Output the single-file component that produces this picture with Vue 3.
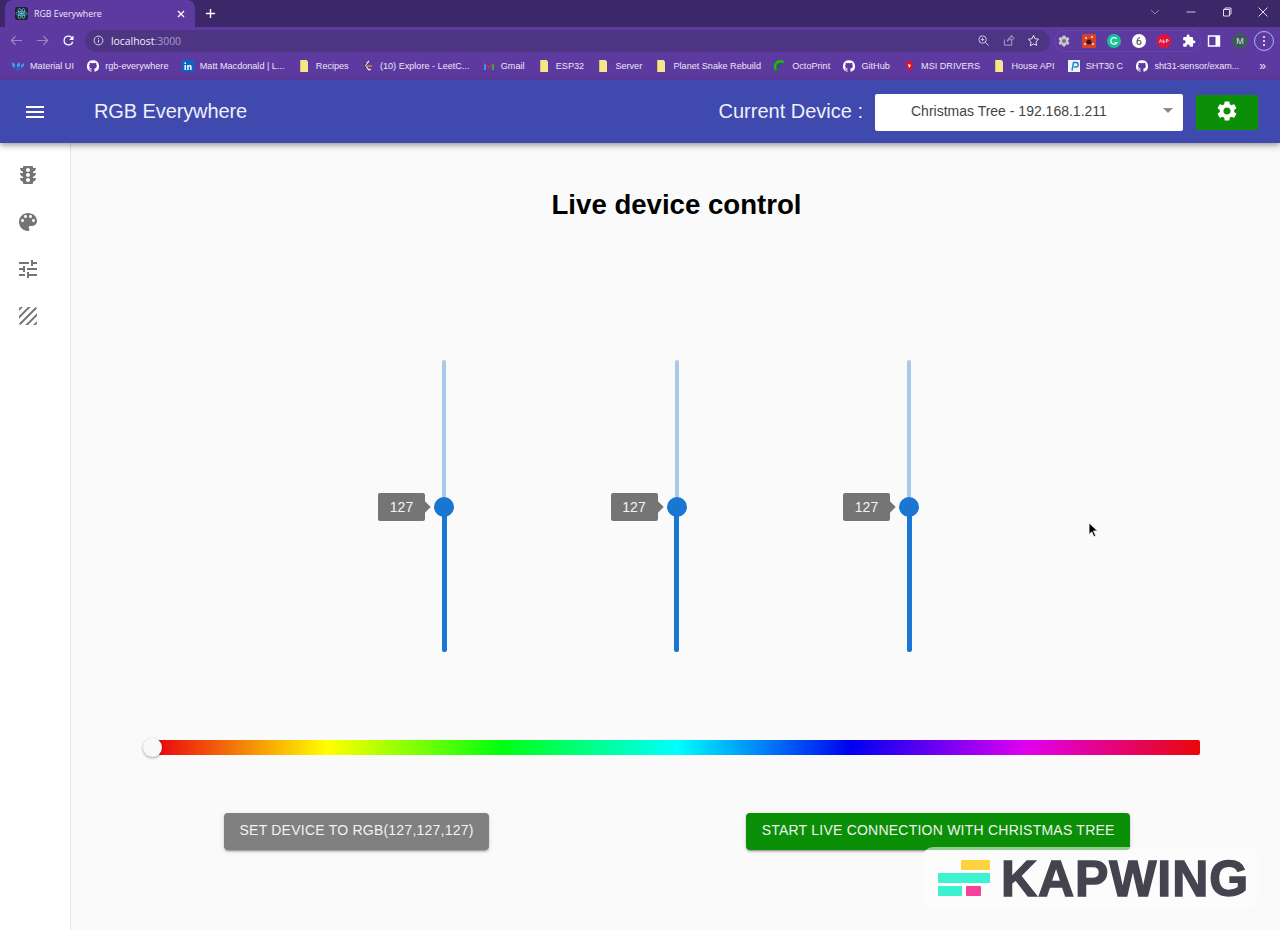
<script setup>
const bookmarks = [
  { icon: 'mui', label: 'Material UI' },
  { icon: 'gh', label: 'rgb-everywhere' },
  { icon: 'in', label: 'Matt Macdonald | L...' },
  { icon: 'note', label: 'Recipes' },
  { icon: 'leet', label: '(10) Explore - LeetC...' },
  { icon: 'gmail', label: 'Gmail' },
  { icon: 'note', label: 'ESP32' },
  { icon: 'note', label: 'Server' },
  { icon: 'note', label: 'Planet Snake Rebuild' },
  { icon: 'octo', label: 'OctoPrint' },
  { icon: 'gh', label: 'GitHub' },
  { icon: 'msi', label: 'MSI DRIVERS' },
  { icon: 'note', label: 'House API' },
  { icon: 'p', label: 'SHT30 C' },
  { icon: 'gh', label: 'sht31-sensor/exam...' }
]

const github = 'M12 .3a12 12 0 0 0-3.8 23.4c.6.1.8-.3.8-.6v-2c-3.3.7-4-1.6-4-1.6-.6-1.4-1.4-1.8-1.4-1.8-1-.7.1-.7.1-.7 1.2 0 1.9 1.2 1.9 1.2 1 1.8 2.8 1.3 3.5 1 0-.8.4-1.3.7-1.6-2.7-.3-5.5-1.3-5.5-6 0-1.2.5-2.3 1.3-3.1-.2-.4-.6-1.6 0-3.2 0 0 1-.3 3.4 1.2a11.5 11.5 0 0 1 6 0c2.3-1.5 3.3-1.2 3.3-1.2.6 1.6.2 2.8 0 3.2.9.8 1.3 1.9 1.3 3.2 0 4.6-2.8 5.6-5.5 5.9.5.4.9 1 .9 2.2v3.3c0 .3.1.7.8.6A12 12 0 0 0 12 .3'

const navIcons = [
  'M20 10h-3V8.86c1.72-.45 3-2 3-3.86h-3V4c0-.55-.45-1-1-1H8c-.55 0-1 .45-1 1v1H4c0 1.86 1.28 3.41 3 3.86V10H4c0 1.86 1.28 3.41 3 3.86V15H4c0 1.86 1.28 3.41 3 3.86V20c0 .55.45 1 1 1h8c.55 0 1-.45 1-1v-1.14c1.72-.45 3-2 3-3.86h-3v-1.14c1.72-.45 3-2 3-3.86zm-8 9c-1.11 0-2-.9-2-2s.89-2 2-2c1.1 0 2 .9 2 2s-.89 2-2 2zm0-5c-1.11 0-2-.9-2-2s.89-2 2-2c1.1 0 2 .9 2 2s-.89 2-2 2zm0-5c-1.11 0-2-.9-2-2 0-1.11.89-2 2-2 1.1 0 2 .89 2 2 0 1.1-.89 2-2 2z',
  'M12 3c-4.97 0-9 4.03-9 9s4.03 9 9 9c.83 0 1.5-.67 1.5-1.5 0-.39-.15-.74-.39-1.01-.23-.26-.38-.61-.38-.99 0-.83.67-1.5 1.5-1.5H16c2.76 0 5-2.24 5-5 0-4.42-4.03-8-9-8zm-5.5 9c-.83 0-1.5-.67-1.5-1.5S5.67 9 6.5 9 8 9.67 8 10.5 7.33 12 6.5 12zm3-4C8.67 8 8 7.33 8 6.5S8.67 5 9.5 5s1.5.67 1.5 1.5S10.33 8 9.5 8zm5 0c-.83 0-1.5-.67-1.5-1.5S13.67 5 14.5 5s1.5.67 1.5 1.5S15.33 8 14.5 8zm3 4c-.83 0-1.5-.67-1.5-1.5S16.67 9 17.5 9s1.5.67 1.5 1.5-.67 1.5-1.5 1.5z',
  'M3 17v2h6v-2H3zM3 5v2h10V5H3zm10 16v-2h8v-2h-8v-2h-2v6h2zM7 9v2H3v2h4v2h2V9H7zm14 4v-2H11v2h10zm-6-4h2V7h4V5h-4V3h-2v6z',
  'M19.51 3.08L3.08 19.51c.09.34.27.65.51.9.25.24.56.42.9.51L20.93 4.49c-.19-.69-.73-1.23-1.42-1.41zM11.88 3L3 11.88v2.83L14.71 3h-2.83zM5 3c-1.1 0-2 .9-2 2v2l4-4H5zm14 18c.55 0 1.05-.22 1.41-.59.37-.36.59-.86.59-1.41v-2l-4 4h2zm-9.71 0h2.83L21 12.12V9.29L9.29 21z'
]

const channels = [127, 127, 127]
</script>

<template>
  <div class="app">
    <!-- browser window -->
    <div class="tabStrip">
      <div class="tab">
        <svg class="tabIcon" viewBox="0 0 12 12">
          <rect width="12" height="12" rx="2" fill="#20232a" />
          <circle cx="6" cy="6" r="1.2" fill="#61dafb" />
          <g fill="none" stroke="#61dafb" stroke-width=".6">
            <ellipse cx="6" cy="6" rx="5" ry="2" />
            <ellipse cx="6" cy="6" rx="5" ry="2" transform="rotate(60 6 6)" />
            <ellipse cx="6" cy="6" rx="5" ry="2" transform="rotate(120 6 6)" />
          </g>
        </svg>
        <span class="tabTitle">RGB Everywhere</span>
        <svg class="tabClose" viewBox="0 0 10 10"><path d="M2 2l6 6M8 2l-6 6" stroke="#fff" stroke-width="1.3" /></svg>
      </div>
      <svg class="newTab" viewBox="0 0 12 12"><path d="M6 1v10M1 6h10" stroke="#fff" stroke-width="1.5" /></svg>
      <div class="windowControls">
        <svg viewBox="0 0 12 12"><path d="M2 4l4 4 4-4" fill="none" stroke="#8f84b0" /></svg>
        <svg viewBox="0 0 12 12"><path d="M1.5 6h9" stroke="#cfc8e0" /></svg>
        <svg viewBox="0 0 12 12"><path d="M2.5 3.5h6v6.500h-6zM4 3.500V2h6v6H8.500" fill="none" stroke="#e3deee" /></svg>
        <svg viewBox="0 0 12 12"><path d="M1.500 1.500l9 9M10.500 1.500l-9 9" stroke="#e3deee" /></svg>
      </div>
    </div>

    <div class="toolbar">
      <div class="navButtons">
        <svg viewBox="0 0 16 16"><path d="M14 8H3M7 3.500L2.500 8 7 12.500" fill="none" stroke="#9a86c4" stroke-width="1.300" /></svg>
        <svg viewBox="0 0 16 16"><path d="M2 8h11M9 3.500L13.500 8 9 12.500" fill="none" stroke="#9a86c4" stroke-width="1.300" /></svg>
        <svg viewBox="0 0 24 24"><path fill="#fff" d="M17.650 6.350A7.960 7.960 0 0 0 12 4a8 8 0 1 0 7.730 10h-2.080A6 6 0 1 1 12 6c1.660 0 3.140.69 4.220 1.780L13 11h7V4l-2.350 2.350z" /></svg>
      </div>
      <div class="urlBar">
        <svg class="infoIcon" viewBox="0 0 12 12">
          <circle cx="6" cy="6" r="4.800" fill="none" stroke="#e6dff3" />
          <path d="M6 5.300v3.200M6 3.400v1" stroke="#e6dff3" />
        </svg>
        <span class="urlHost">localhost</span><span class="urlPort">:3000</span>
        <div class="urlActions">
          <svg viewBox="0 0 14 14"><circle cx="6" cy="6" r="4" fill="none" stroke="#d8cfe8" /><path d="M9 9l3.500 3.500M4.200 6h3.600M6 4.200v3.600" stroke="#d8cfe8" /></svg>
          <svg viewBox="0 0 14 14"><path d="M2.500 6v6h8V8M6 8c0-3 2-4.500 4-4.500V1.500L13 4.500 10 7.500v-2C8 5.500 6.500 6 6 8z" fill="none" stroke="#b9a9d6" /></svg>
          <svg viewBox="0 0 14 14"><path d="M7 1.500l1.700 3.600 3.800.5-2.800 2.700.7 3.900L7 10.800l-3.400 1.900.7-3.900L1.500 5.600l3.800-.5z" fill="none" stroke="#f0ebf8" /></svg>
        </div>
      </div>
      <div class="extensions">
        <div class="extGroup">
          <svg viewBox="0 0 24 24"><path fill="#c9c6ce" d="M19.140 12.940c.04-.3.06-.61.06-.94 0-.32-.02-.64-.07-.94l2.030-1.580c.18-.14.23-.41.12-.61l-1.920-3.320c-.12-.22-.37-.29-.59-.22l-2.390.96c-.5-.38-1.030-.7-1.620-.94l-.36-2.540c-.04-.24-.24-.41-.48-.41h-3.840c-.24 0-.43.17-.47.41l-.36 2.540c-.59.24-1.130.57-1.620.94l-2.390-.96c-.22-.08-.47 0-.59.22L2.740 8.870c-.12.21-.08.47.12.61l2.030 1.580c-.05.3-.09.63-.09.94s.02.64.07.94l-2.030 1.580c-.18.14-.23.41-.12.61l1.920 3.320c.12.22.37.29.59.22l2.390-.96c.5.38 1.030.7 1.620.94l.36 2.540c.05.24.24.41.48.41h3.840c.24 0 .44-.17.47-.41l.36-2.540c.59-.24 1.130-.56 1.620-.94l2.390.96c.22.08.47 0 .59-.22l1.920-3.320c.12-.22.07-.47-.12-.61l-2.010-1.580z" /><circle cx="12" cy="12" r="3.500" fill="#77707f" /></svg>
          <svg viewBox="0 0 14 14"><rect width="14" height="14" rx="1" fill="#d7402a" /><path d="M3 3h2v2H3zM9 2h2v2H9zM2 9h2v2H2zM10 9h2v2h-2z" fill="#f2c1a0" /><circle cx="7" cy="8" r="2.500" fill="#2a1a20" /></svg>
          <svg viewBox="0 0 14 14"><circle cx="7" cy="7" r="7" fill="#15c39a" /><path d="M9.800 5A3.300 3.300 0 1 0 10 8.500H7.500" fill="none" stroke="#fff" stroke-width="1.200" /></svg>
          <svg viewBox="0 0 14 14"><circle cx="7" cy="7" r="7" fill="#fff" /><path d="M8 3.500C6 4 5 6 5 8c0 1.500.8 2.500 2 2.500S9 9.500 9 8.300 8 6.500 7 6.500 5.500 7 5 8" fill="none" stroke="#555" stroke-width="1.100" /></svg>
          <svg viewBox="0 0 14 14"><path d="M4 0h6l4 4v6l-4 4H4l-4-4V4z" fill="#d8163f" /><path d="M2.500 8.500l1-3 1 3M6 5.500v3h1.200a.8.8 0 0 0 0-1.500H6M9.500 8.500v-3h1a.8.8 0 0 1 0 1.600h-1" fill="none" stroke="#fff" stroke-width=".7" /></svg>
          <svg viewBox="0 0 24 24"><path fill="#fff" d="M20.500 11H19V7c0-1.100-.9-2-2-2h-4V3.500a2.500 2.500 0 0 0-5 0V5H4c-1.100 0-1.990.9-1.990 2v3.800H3.500c1.490 0 2.700 1.210 2.700 2.700s-1.210 2.700-2.700 2.700H2V20c0 1.100.9 2 2 2h3.800v-1.500c0-1.490 1.210-2.700 2.700-2.700 1.490 0 2.700 1.210 2.700 2.700V22H17c1.100 0 2-.9 2-2v-4h1.500a2.500 2.500 0 0 0 0-5z" /></svg>
        </div>
        <svg viewBox="0 0 14 14"><path d="M1.500 2h11v10h-11z" fill="none" stroke="#fff" stroke-width="1.400" /><path d="M8.500 2h4v10h-4z" fill="#fff" /></svg>
        <span class="avatar">M</span>
        <span class="menuRing"><i></i><i></i><i></i></span>
      </div>
    </div>

    <div class="bookmarks">
      <div v-for="(b, i) in bookmarks" :key="i" class="bookmark">
        <svg v-if="b.icon === 'gh'" class="bmIcon" viewBox="0 0 24 24"><path :d="github" fill="#fff" /></svg>
        <svg v-else-if="b.icon === 'note'" class="bmIcon" viewBox="0 0 12 12"><path d="M2 0h6.500L10 1.500V12H2z" fill="#f6e58d" /><path d="M2 0h1v12H2z" fill="#d9c55c" /></svg>
        <svg v-else-if="b.icon === 'mui'" class="bmIcon" viewBox="0 0 12 12"><path d="M0 2l3 2v4L0 6zM8 2L5 4v4l3-2zM9 8l3-2V3L9 5z" fill="#3d9be9" /><path d="M4 9l2 2 3-2-2-1z" fill="#1b6fc2" /></svg>
        <svg v-else-if="b.icon === 'in'" class="bmIcon" viewBox="0 0 12 12"><rect width="12" height="12" rx="1" fill="#0a66c2" /><path d="M2.500 5h1.500v5H2.500zM2.500 2.500h1.500V4H2.500zM5.200 5h1.400v.7c.7-1.100 3-1 3 1.100V10H8.100V7.200c0-1.200-1.400-1.100-1.400 0V10H5.200z" fill="#fff" /></svg>
        <svg v-else-if="b.icon === 'leet'" class="bmIcon" viewBox="0 0 12 12"><path d="M7 1L3 5.500 7 10l2-1" fill="none" stroke="#e8e8e8" stroke-width="1.200" /><path d="M5 6h5" stroke="#f89f1b" stroke-width="1.200" /><path d="M4 3L2.500 5.500 4 8" fill="none" stroke="#222" /></svg>
        <svg v-else-if="b.icon === 'gmail'" class="bmIcon" viewBox="0 0 12 12"><path d="M1 3v7h2V5.500L6 8l3-2.500V10h2V3L6 6.500z" fill="#d8352a" /><path d="M1 3v7h2V5.500z" fill="#4b8bf0" /><path d="M11 3v7H9V5.500z" fill="#34a853" /></svg>
        <svg v-else-if="b.icon === 'octo'" class="bmIcon" viewBox="0 0 12 12"><path d="M9.500 2.500A5 5 0 0 0 3 10.500" fill="none" stroke="#13c100" stroke-width="2.600" /><path d="M2 11c1-3 3-6 6-7" fill="none" stroke="#0b7a00" /></svg>
        <svg v-else-if="b.icon === 'msi'" class="bmIcon" viewBox="0 0 12 12"><path d="M3 1l6 1 1 4-3 5-2-1-2-3z" fill="#e0102a" /><path d="M5 4l3 1-2 3z" fill="#fff" /></svg>
        <svg v-else class="bmIcon" viewBox="0 0 12 12"><rect width="12" height="12" fill="#eaf4fb" /><path d="M4 10.500l1.500-8H8a2 2 0 0 1 0 4.500H6" fill="none" stroke="#1f7fc4" stroke-width="1.400" /></svg>
        <span>{{ b.label }}</span>
      </div>
      <span class="bmMore">»</span>
    </div>

    <!-- app bar -->
    <header class="appBar">
      <svg class="menuIcon" viewBox="0 0 24 24"><path fill="#fff" d="M3 18h18v-2H3v2zm0-5h18v-2H3v2zm0-7v2h18V6H3z" /></svg>
      <span class="appTitle">RGB Everywhere</span>
      <span class="deviceLabel">Current Device :</span>
      <div class="deviceSelect">
        <span>Christmas Tree - 192.168.1.211</span>
        <i class="caret"></i>
      </div>
      <button class="settingsBtn">
        <svg viewBox="0 0 24 24"><path fill="#fff" d="M19.140 12.940c.04-.3.06-.61.06-.94 0-.32-.02-.64-.07-.94l2.030-1.580c.18-.14.23-.41.12-.61l-1.920-3.320c-.12-.22-.37-.29-.59-.22l-2.390.96c-.5-.38-1.030-.7-1.620-.94l-.36-2.540c-.04-.24-.24-.41-.48-.41h-3.840c-.24 0-.43.17-.47.41l-.36 2.540c-.59.24-1.130.57-1.620.94l-2.390-.96c-.22-.08-.47 0-.59.22L2.740 8.870c-.12.21-.08.47.12.61l2.030 1.580c-.05.3-.09.63-.09.94s.02.64.07.94l-2.030 1.580c-.18.14-.23.41-.12.61l1.920 3.320c.12.22.37.29.59.22l2.390-.96c.5.38 1.030.7 1.620.94l.36 2.540c.05.24.24.41.48.41h3.840c.24 0 .44-.17.47-.41l.36-2.540c.59-.24 1.130-.56 1.620-.94l2.390.96c.22.08.47 0 .59-.22l1.920-3.320c.12-.22.07-.47-.12-.61l-2.010-1.580zM12 15.600c-1.980 0-3.600-1.620-3.600-3.600s1.620-3.600 3.600-3.600 3.600 1.620 3.600 3.600-1.620 3.600-3.600 3.600z" /></svg>
      </button>
    </header>

    <div class="body">
      <nav class="sidebar">
        <div v-for="(d, i) in navIcons" :key="i" class="navItem">
          <svg viewBox="0 0 24 24"><path :d="d" fill="#757575" /></svg>
        </div>
      </nav>

      <main class="content">
        <h1 class="pageTitle">Live device control</h1>

        <div class="sliders">
          <div v-for="(v, i) in channels" :key="i" class="sliderCell">
            <div class="rail">
              <div class="fill" :style="{ height: (v / 255 * 100) + '%' }"></div>
              <div class="thumb" :style="{ bottom: (v / 255 * 100) + '%' }">
                <div class="valueLabel">{{ v }}</div>
              </div>
            </div>
          </div>
        </div>

        <div class="hueSlider">
          <div class="hueThumb"></div>
        </div>

        <div class="actions">
          <button class="btn btnGrey">Set device to RGB(127,127,127)</button>
          <button class="btn btnGreen">Start live connection with Christmas Tree</button>
        </div>
      </main>
    </div>

    <!-- overlays -->
    <svg class="cursor" viewBox="0 0 12 18"><path d="M1 1v13l3-3 2.500 5.500 2-1L6 10h4.500z" fill="#000" stroke="#fff" stroke-width=".8" /></svg>

    <div class="watermark">
      <div class="kapLogo">
        <div class="kapRow kapRowEnd"><i class="kapYellow"></i></div>
        <div class="kapRow"><i class="kapCyanLong"></i></div>
        <div class="kapRow"><i class="kapCyanShort"></i><i class="kapPink"></i></div>
      </div>
      <span class="kapText">KAPWING</span>
    </div>
  </div>
</template>

<style scoped>
  .app {
    position: relative;
    width: 1280px;
    height: 930px;
    overflow: hidden;
    display: flex;
    flex-direction: column;
    font-family: "Liberation Sans", Arial, sans-serif;
    background: #fafafa;
  }

  /* browser chrome */
  .tabStrip {
    height: 27px;
    background: #3c2768;
    display: flex;
    align-items: center;
    padding-left: 5px;
    flex-shrink: 0;
  }

  .tab {
    width: 190px;
    height: 27px;
    background: #5c3a9f;
    border-radius: 8px 8px 0 0;
    display: flex;
    align-items: center;
    padding: 0 9px 0 10px;
    box-sizing: border-box;
    color: #efe9fa;
    font-size: 10px;
  }

  .tabIcon {
    width: 13px;
    height: 13px;
    margin-right: 6px;
  }

  .tabTitle {
    flex: 1;
    font-family: "Open Sans", sans-serif;
    font-size: 8.8px;
  }

  .tabClose {
    width: 10px;
    height: 10px;
  }

  .newTab {
    width: 11px;
    height: 11px;
    margin-left: 10px;
  }

  .windowControls {
    margin-left: auto;
    display: flex;
    gap: 24px;
    padding-right: 11px;
    margin-top: -4px;
  }

  .windowControls svg {
    width: 12px;
    height: 12px;
  }

  .toolbar {
    height: 25px;
    box-sizing: border-box;
    background: #5c3a9f;
    display: flex;
    align-items: center;
    flex-shrink: 0;
    padding-top: 2px;
  }

  .navButtons {
    width: 85px;
    display: flex;
    gap: 11px;
    padding-left: 9px;
    box-sizing: border-box;
    align-items: center;
  }

  .navButtons svg {
    width: 15px;
    height: 15px;
  }

  .urlBar {
    width: 965px;
    height: 22px;
    border-radius: 11px;
    background: #4e3583;
    display: flex;
    align-items: center;
    padding: 0 10px 0 8px;
    box-sizing: border-box;
    font-family: "Open Sans", sans-serif;
    font-size: 10.4px;
  }

  .infoIcon {
    width: 11px;
    height: 11px;
    margin-right: 7px;
  }

  .urlHost {
    color: #f1ecf9;
  }

  .urlPort {
    color: #ab9ccb;
  }

  .urlActions {
    margin-left: auto;
    display: flex;
    gap: 12px;
  }

  .urlActions svg {
    width: 13px;
    height: 13px;
  }

  .extensions {
    flex: 1;
    display: flex;
    align-items: center;
    gap: 11px;
    padding-left: 4px;
  }

  .extensions svg {
    width: 14px;
    height: 14px;
  }

  .extGroup {
    display: flex;
    align-items: center;
    gap: 11px;
    height: 20px;
    padding: 0 4px 0 2px;
    margin-right: -5px;
    border: 1px solid #6645ad;
    border-radius: 11px;
  }

  .avatar {
    width: 16px;
    height: 16px;
    border-radius: 50%;
    background: #3f5a5c;
    color: #d8e0e0;
    font-size: 9px;
    display: flex;
    align-items: center;
    justify-content: center;
    flex-shrink: 0;
  }

  .menuRing {
    width: 20px;
    height: 20px;
    border: 1px solid #a9b8f0;
    border-radius: 50%;
    box-sizing: border-box;
    display: flex;
    flex-direction: column;
    align-items: center;
    justify-content: center;
    gap: 2px;
    margin-left: -5px;
    flex-shrink: 0;
  }

  .menuRing i {
    width: 2px;
    height: 2px;
    border-radius: 50%;
    background: #fff;
  }

  .bookmarks {
    height: 28px;
    background: #5c3a9f;
    display: flex;
    align-items: center;
    padding-left: 12px;
    gap: 13.3px;
    flex-shrink: 0;
    color: #ece6f7;
    font-family: "Liberation Sans", sans-serif;
    font-size: 9.1px;
    white-space: nowrap;
  }

  .bookmark {
    display: flex;
    align-items: center;
    gap: 6px;
  }

  .bmIcon {
    width: 12px;
    height: 12px;
    flex-shrink: 0;
  }

  .bmMore {
    margin-left: auto;
    padding-right: 14px;
    font-size: 12px;
  }

  /* app bar */
  .appBar {
    height: 63px;
    background: #3f49ae;
    display: flex;
    align-items: center;
    padding: 0 22px 0 23px;
    box-sizing: border-box;
    color: #eef0fb;
    flex-shrink: 0;
    position: relative;
    z-index: 2;
    box-shadow: 0 2px 4px -1px rgba(0,0,0,.2), 0 4px 5px 0 rgba(0,0,0,.14), 0 1px 10px 0 rgba(0,0,0,.12);
  }

  .menuIcon {
    width: 24px;
    height: 24px;
    margin-right: 47px;
  }

  .appTitle {
    font-size: 20px;
    letter-spacing: -0.1px;
  }

  .deviceLabel {
    margin-left: auto;
    font-size: 20px;
    margin-right: 12px;
  }

  .deviceSelect {
    width: 308px;
    height: 37px;
    margin-top: 1px;
    background: #fff;
    border-radius: 2px;
    color: #444;
    font-size: 14px;
    display: flex;
    align-items: center;
    padding: 0 10px 2px 36px;
    box-sizing: border-box;
    justify-content: space-between;
  }

  .caret {
    width: 0;
    height: 0;
    border-left: 5px solid transparent;
    border-right: 5px solid transparent;
    border-top: 5px solid #8a8a8a;
    margin-top: -2px;
  }

  .settingsBtn {
    width: 62px;
    height: 35px;
    margin-top: 1px;
    margin-left: 13px;
    padding: 0 0 2px;
    border: 0;
    border-radius: 2px;
    background: #0a8f06;
    display: flex;
    align-items: center;
    justify-content: center;
  }

  .settingsBtn svg {
    width: 24px;
    height: 24px;
  }

  /* page */
  .body {
    flex: 1;
    display: flex;
    min-height: 0;
  }

  .sidebar {
    width: 71px;
    box-sizing: border-box;
    background: #fff;
    border-right: 1px solid #e4e4e4;
    padding-top: 8px;
    flex-shrink: 0;
  }

  .navItem {
    height: 47px;
    display: flex;
    align-items: center;
    padding-left: 16px;
  }

  .navItem svg {
    width: 24px;
    height: 24px;
  }

  .content {
    flex: 1;
    background: #fafafa;
    padding-top: 46px;
  }

  .pageTitle {
    margin: 0;
    font-size: 27.6px;
    line-height: 32px;
    font-weight: 700;
    color: #000;
    text-align: center;
    padding-left: 2px;
  }

  .sliders {
    margin-top: 139px;
    height: 292px;
    display: flex;
    justify-content: center;
    padding-left: 2px;
  }

  .sliderCell {
    width: 232.5px;
    display: flex;
    justify-content: center;
  }

  .rail {
    position: relative;
    width: 4px;
    height: 292px;
    background: #a9c8ea;
    border-radius: 2px;
  }

  .fill {
    position: absolute;
    left: -0.5px;
    right: -0.5px;
    bottom: 0;
    background: #1976d2;
    border-radius: 2px;
  }

  .thumb {
    position: absolute;
    left: -8px;
    width: 20px;
    height: 20px;
    margin-bottom: -10px;
    border-radius: 50%;
    background: #1976d2;
  }

  .valueLabel {
    position: absolute;
    right: 29px;
    top: -4px;
    width: 47px;
    height: 28px;
    background: #757575;
    border-radius: 2px;
    color: #f4f4f4;
    font-size: 14px;
    line-height: 28px;
    text-align: center;
  }

  .valueLabel::after {
    content: "";
    position: absolute;
    left: 43px;
    top: 10px;
    width: 8px;
    height: 8px;
    background: #757575;
    transform: rotate(45deg);
  }

  .hueSlider {
    position: relative;
    margin: 88px 0 0 82px;
    width: 1047px;
    height: 15px;
    border-radius: 2px;
    background: linear-gradient(to right, #ea0010, #ffff00, #00ff10, #00ffff, #0000f0, #e000f0, #e80808);
  }

  .hueThumb {
    position: absolute;
    left: -10px;
    top: -2px;
    width: 19px;
    height: 19px;
    border-radius: 50%;
    background: #f8f8f8;
    box-shadow: 0 1px 3px rgba(0,0,0,.35);
  }

  .actions {
    margin-top: 58px;
    padding-left: 153px;
    display: flex;
    gap: 257px;
  }

  .btn {
    height: 37px;
    padding: 0 15.5px 3px;
    border: 0;
    border-radius: 4px;
    color: #f2f2f2;
    font-family: "Liberation Sans", Arial, sans-serif;
    font-size: 14px;
    letter-spacing: 0.23px;
    text-transform: uppercase;
    white-space: nowrap;
    box-shadow: 0 3px 1px -2px rgba(0,0,0,.2), 0 2px 2px 0 rgba(0,0,0,.14), 0 1px 5px 0 rgba(0,0,0,.12);
  }

  .btnGrey {
    background: #808080;
  }

  .btnGreen {
    background: #0a8f06;
  }

  /* things lying over the page */
  .cursor {
    position: absolute;
    left: 1088px;
    top: 522px;
    width: 11px;
    height: 16px;
  }

  .watermark {
    position: absolute;
    left: 923px;
    top: 847px;
    width: 335px;
    height: 61px;
    background: linear-gradient(rgba(252,252,252,.55) 3px, #fcfcfc 3px);
    border-radius: 10px;
    display: flex;
    align-items: center;
    padding-left: 15px;
    box-sizing: border-box;
  }

  .kapLogo {
    width: 52px;
    display: flex;
    flex-direction: column;
    gap: 3px;
    margin-right: 11px;
  }

  .kapRow {
    display: flex;
    gap: 4px;
    height: 10px;
  }

  .kapRowEnd {
    justify-content: flex-end;
  }

  .kapYellow {
    width: 29px;
    background: #ffd23f;
    border-radius: 1px;
  }

  .kapCyanLong {
    width: 52px;
    background: #3cf2d0;
    border-radius: 1px;
  }

  .kapCyanShort {
    width: 24px;
    background: #3cf2d0;
    border-radius: 1px;
  }

  .kapPink {
    width: 15px;
    background: #f5409c;
    border-radius: 1px;
  }

  .kapText {
    font-size: 50px;
    font-weight: 700;
    line-height: 50px;
    margin-top: 3px;
    letter-spacing: 0.9px;
    color: #44444f;
    -webkit-text-stroke: 1.4px #44444f;
  }
</style>
